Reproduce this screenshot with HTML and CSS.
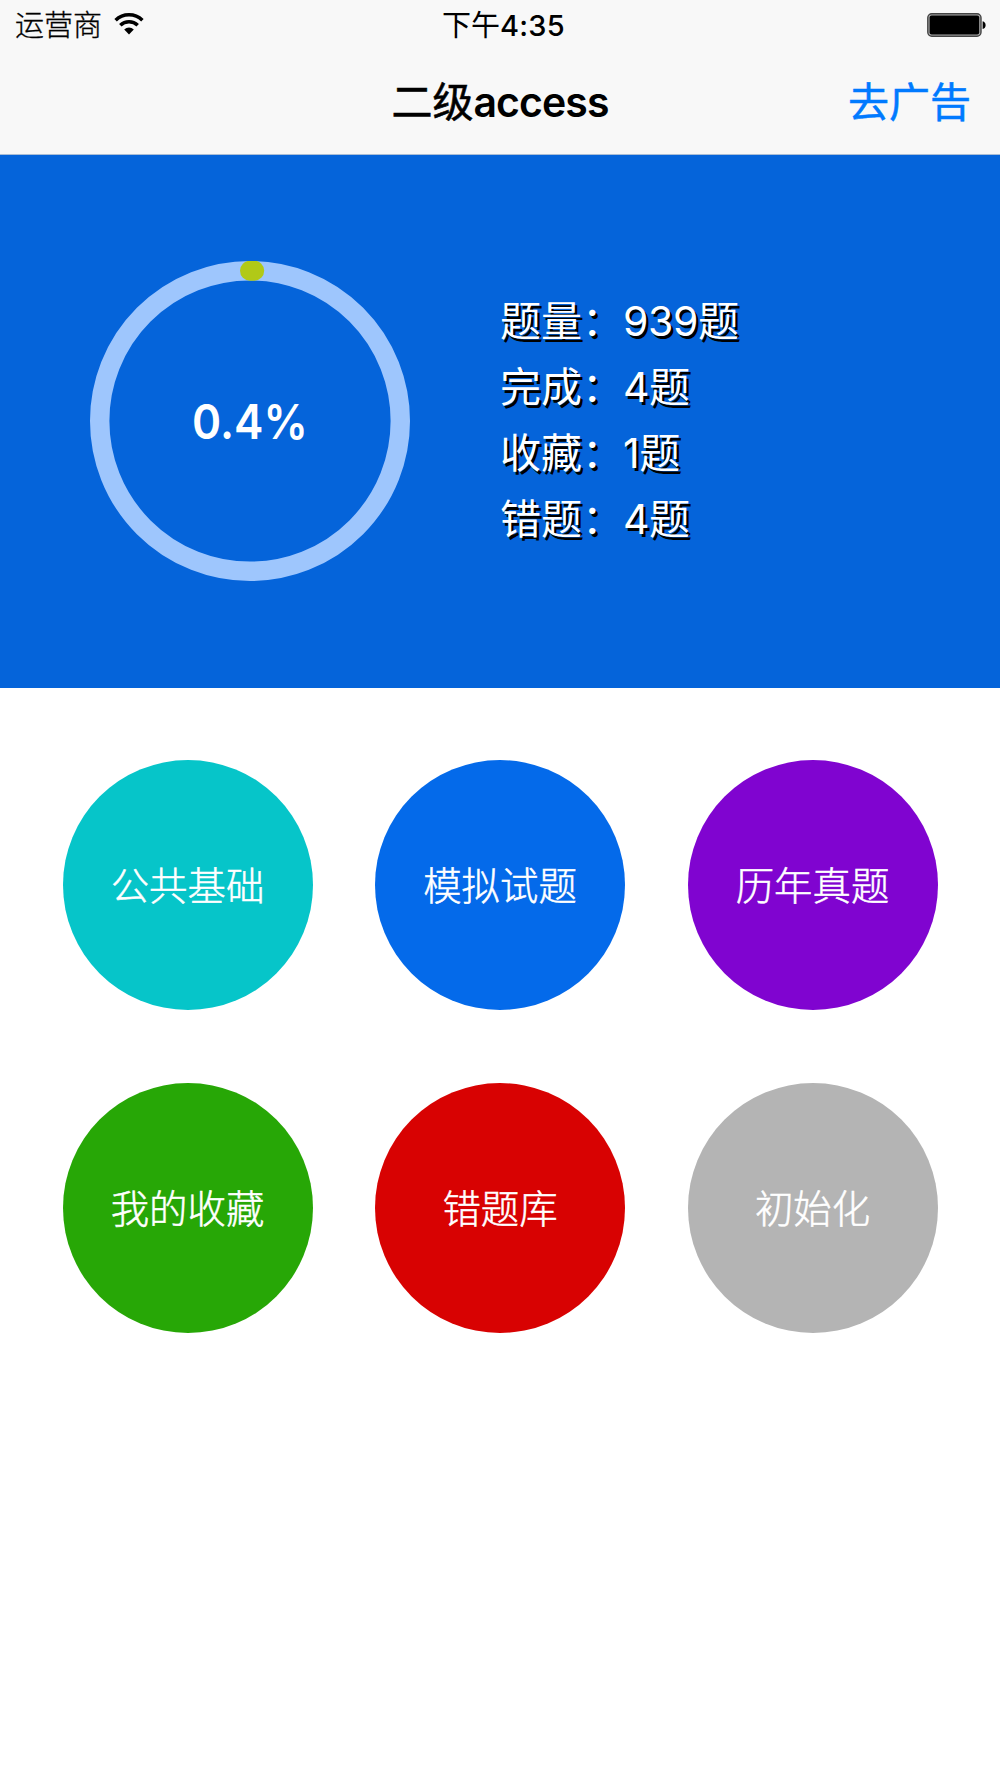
FILE: index.html
```html
<!DOCTYPE html>
<html lang="zh-CN">

<head>
    <meta charset="UTF-8">
    <meta name="viewport" content="width=device-width, initial-scale=1.0">
    <title>二级access</title>
    <link rel="stylesheet" href="styles.css">
</head>

<body>
    <header class="header">
        <div class="status-bar">
            <div class="carrier">
                <span>运营商</span>
                <svg class="wifi" width="30" height="22" viewBox="0 0 30 22">
                    <path d="M1.6 7.2a19.2 19.2 0 0 1 26.8 0" fill="none" stroke="#000" stroke-width="3.5" />
                    <path d="M6.3 12.3a12.5 12.5 0 0 1 17.4 0" fill="none" stroke="#000" stroke-width="3.5" />
                    <path d="M10.2 16.4a7 7 0 0 1 9.6 0L15 21.4z" />
                </svg>
            </div>
            <div class="time">下午<span class="digits">4:35</span></div>
            <svg class="battery" width="60" height="24" viewBox="0 0 60 24">
                <rect x="0.8" y="0.8" width="53.2" height="22.4" rx="4" fill="#aaa" stroke="#444" stroke-width="1.4" />
                <rect x="2.6" y="2.6" width="49.6" height="18.8" rx="2" />
                <path d="M55.6 8.2c4 .6 4 7.2 0 7.8z" />
            </svg>
        </div>
        <nav class="nav-bar">
            <h1 class="title">二级<span class="latin">access</span></h1>
            <a class="remove-ads" href="#">去广告</a>
        </nav>
    </header>

    <section class="summary">
        <div class="chart">
            <svg class="ring" width="320" height="320" viewBox="0 0 320 320">
                <circle cx="160" cy="160" r="150.3" fill="none" stroke="#9ec6fd" stroke-width="19.4" />
                <path d="M160 9.7h4.2" fill="none" stroke="#b1c917" stroke-width="20" stroke-linecap="round" />
            </svg>
            <span class="percent">0.4%</span>
        </div>
        <ul class="stats">
            <li>题量：<span>939</span>题</li>
            <li>完成：<span>4</span>题</li>
            <li>收藏：<span>1</span>题</li>
            <li>错题：<span>4</span>题</li>
        </ul>
    </section>

    <main class="menu">
        <a class="item basics" href="#">公共基础</a>
        <a class="item mock" href="#">模拟试题</a>
        <a class="item past" href="#">历年真题</a>
        <a class="item favorites" href="#">我的收藏</a>
        <a class="item wrong" href="#">错题库</a>
        <a class="item reset" href="#">初始化</a>
    </main>
</body>

</html>
```
FILE: styles.css
```css
body {
    margin: 0;
    width: 1000px;
    min-height: 1778px;
    background: #fff;
    font-family: 'Inter', 'Noto Sans CJK SC', sans-serif;
}

a {
    text-decoration: none;
}

.header {
    box-sizing: border-box;
    height: 155px;
    background: #f8f8f8;
    border-bottom: 1px solid #a9bdd6;
}

.status-bar {
    display: grid;
    grid-template-columns: 1fr auto 1fr;
    align-items: center;
    height: 50px;
    padding: 0 13px 0 15px;
    font-size: 29px;
    line-height: 48px;
}

.carrier {
    display: flex;
    align-items: center;
    gap: 12px;
    padding-top: 2px;
    font-weight: 300;
    -webkit-text-stroke: 0.3px #000;
}

.wifi {
    margin-bottom: 5px;
}

.time {
    padding: 2px 0 0 5px;
}

.digits {
    font-weight: 500;
    letter-spacing: 0.3px;
}

.battery {
    justify-self: end;
    margin-bottom: 1px;
}

.nav-bar {
    display: grid;
    grid-template-columns: 1fr auto 1fr;
    align-items: center;
    height: 104px;
    padding: 0 29px;
    font-size: 41px;
    line-height: 102px;
}

.title {
    grid-column: 2;
    margin: 0;
    padding-bottom: 1px;
    font-size: 41px;
    font-weight: 400;
    -webkit-text-stroke: 0.6px #000;
}

.latin {
    font-weight: 600;
    letter-spacing: -0.9px;
    -webkit-text-stroke: 0;
}

.remove-ads {
    justify-self: end;
    color: #007aff;
    -webkit-text-stroke: 0.5px #007aff;
}

.summary {
    display: grid;
    grid-template-columns: 500px 500px;
    align-items: center;
    height: 532.5px;
    background: #0564da;
    color: #fff;
}

.chart {
    display: grid;
    place-items: center;
}

.ring,
.percent {
    grid-area: 1 / 1;
}

.percent {
    font-size: 48px;
    font-weight: 600;
    transform: scaleX(0.92);
}

.stats {
    margin: 0;
    padding: 0 0 3px;
    list-style: none;
    font-size: 41px;
    line-height: 66px;
    text-shadow: 2.5px 2.5px 0 #000;
}

.stats span {
    letter-spacing: -0.4px;
}

.menu {
    display: grid;
    grid-template-columns: repeat(3, 250px);
    gap: 72.5px 62.5px;
    padding: 72.5px 62.5px;
}

.item {
    display: flex;
    box-sizing: border-box;
    align-items: center;
    justify-content: center;
    height: 250px;
    padding-bottom: 4px;
    border-radius: 50%;
    color: #fff;
    font-size: 38.4px;
    font-weight: 300;
    -webkit-text-stroke: 0.5px #fff;
}

.basics {
    background: #06c5c9;
}

.mock {
    background: #046aea;
}

.past {
    background: #8004d0;
}

.favorites {
    background: #27a706;
}

.wrong {
    background: #d80202;
}

.reset {
    background: #b4b4b4;
}
```
